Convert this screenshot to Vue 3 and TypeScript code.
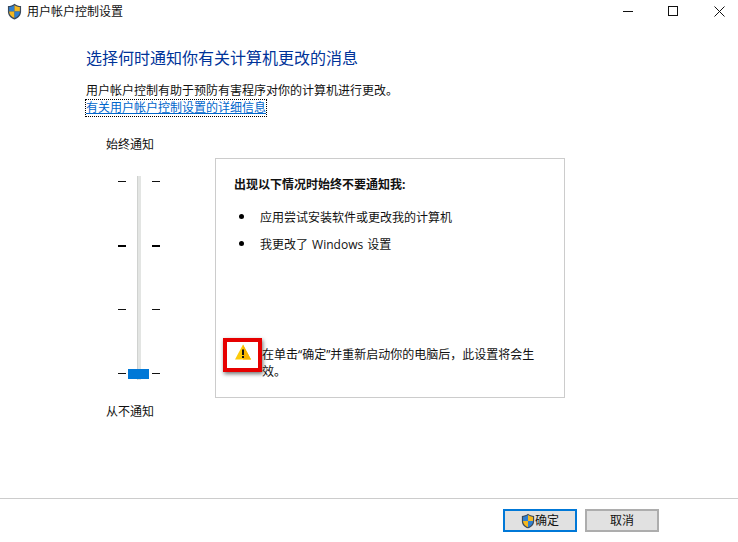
<script setup lang="ts">
const ticks: boolean[] = [false, true, false, false]
const bullets: string[] = ['应用尝试安装软件或更改我的计算机', '我更改了 Windows 设置']
</script>

<template>
  <div class="window">
    <header class="titlebar">
      <svg class="shield" viewBox="0 0 16 18" width="15" height="17">
        <path d="M8 .6C6 2.2 3.6 3 1 3.2v6c0 4 3 6.900 7 8.200 4-1.300 7-4.200 7-8.200v-6C12.400 3 10 2.200 8 .6z" fill="#3b4a5c" />
        <path d="M8 2.200V9H2.300V4.300C4.400 4.100 6.300 3.400 8 2.200z" fill="#2f7fd0" />
        <path d="M8 2.200V9h5.700V4.300C11.600 4.100 9.700 3.400 8 2.200z" fill="#f5b81f" />
        <path d="M2.300 9H8v7C4.800 14.800 2.300 12.400 2.300 9z" fill="#f5b81f" />
        <path d="M13.700 9H8v7c3.200-1.200 5.700-3.600 5.700-7z" fill="#2f7fd0" />
      </svg>
      <span class="title">用户帐户控制设置</span>
      <div class="controls">
        <svg width="10" height="10" viewBox="0 0 10 10" class="min"><path d="M0 5.500h10" stroke="#111" fill="none" /></svg>
        <svg width="10" height="10" viewBox="0 0 10 10" class="max"><rect x=".5" y=".5" width="9" height="9" stroke="#111" fill="none" /></svg>
        <svg width="11" height="11" viewBox="0 0 11 11" class="close"><path d="M.5.500l10 10M10.500.500l-10 10" stroke="#111" fill="none" /></svg>
      </div>
    </header>

    <main class="content">
      <h1 class="heading">选择何时通知你有关计算机更改的消息</h1>
      <p class="desc">用户帐户控制有助于预防有害程序对你的计算机进行更改。</p>
      <a class="link">有关用户帐户控制设置的详细信息</a>

      <div class="body">
        <div class="slider-col">
          <div class="slider-label">始终通知</div>
          <div class="slider">
            <div class="track"></div>
            <div class="ticks">
              <div v-for="(bold, i) in ticks" :key="i" class="tick-row" :class="{ bold }">
                <span class="tick"></span><span class="tick"></span>
              </div>
            </div>
            <div class="thumb"></div>
          </div>
          <div class="slider-label bottom">从不通知</div>
        </div>

        <section class="panel">
          <div class="panel-title">出现以下情况时始终不要通知我:</div>
          <ul class="list">
            <li v-for="b in bullets" :key="b"><span class="dot"></span><span>{{ b }}</span></li>
          </ul>
          <div class="notice">
            <div class="warn-box">
              <svg class="warn-icon" width="16" height="16" viewBox="0 0 16 16">
                <path d="M8 .5L16 15.500H0z" fill="#fdcb0a" />
                <path d="M8 .5L16 15.500H8z" fill="#f7b500" />
                <rect x="7" y="5.500" width="2" height="5.500" fill="#111" />
                <rect x="7" y="12" width="2" height="2" fill="#111" />
              </svg>
            </div>
            <p class="notice-text">在单击“确定”并重新启动你的电脑后，此设置将会生效。</p>
          </div>
        </section>
      </div>
    </main>

    <footer class="footer">
      <button class="btn primary">
        <svg viewBox="0 0 16 18" width="14" height="16">
          <path d="M8 .6C6 2.200 3.600 3 1 3.200v6c0 4 3 6.900 7 8.200 4-1.300 7-4.200 7-8.200v-6C12.400 3 10 2.200 8 .6z" fill="#3b4a5c" />
          <path d="M8 2.200V9H2.300V4.300C4.400 4.100 6.300 3.400 8 2.200z" fill="#2f7fd0" />
          <path d="M8 2.200V9h5.700V4.300C11.600 4.100 9.700 3.400 8 2.200z" fill="#f5b81f" />
          <path d="M2.300 9H8v7C4.800 14.800 2.300 12.400 2.300 9z" fill="#f5b81f" />
          <path d="M13.700 9H8v7c3.200-1.200 5.700-3.600 5.700-7z" fill="#2f7fd0" />
        </svg>
        <span>确定</span>
      </button>
      <button class="btn">取消</button>
    </footer>
  </div>
</template>

<style scoped>
.window {
  width: 738px;
  height: 542px;
  background: #fff;
  color: #111;
  display: flex;
  flex-direction: column;
  overflow: hidden;
  font-family: "Open Sans", "Noto Sans CJK SC", sans-serif;
  font-size: 12px;
  line-height: 16px;
}
.titlebar {
  height: 23px;
  display: flex;
  align-items: center;
  padding-left: 7px;
  flex: none;
}
.shield { flex: none; margin-right: 5px; }
.title { color: #111; }
.controls {
  margin-left: auto;
  display: flex;
  align-items: flex-start;
  align-self: flex-start;
  padding: 6px 13px 0 0;
}
.min { margin-right: 35px; }
.max { margin-right: 36px; }
.content {
  flex: 1;
  padding: 24px 0 0 86px;
  display: flex;
  flex-direction: column;
  align-items: flex-start;
}
.heading {
  margin: 0;
  font-size: 16px;
  font-weight: 400;
  line-height: 22px;
  color: #003399;
}
.desc { margin: 14px 0 0; }
.link {
  margin-top: 1px;
  color: #0066cc;
  text-decoration: underline;
  outline: 1px dotted #000;
  outline-offset: 0;
}
.body {
  display: flex;
  margin-top: 5px;
  margin-left: 20px;
  position: relative;
}
.slider-col {
  width: 48px;
  margin-right: 61px;
  padding-top: 16px;
  display: flex;
  flex-direction: column;
}
.slider-label { white-space: nowrap; }
.slider-label.bottom { margin-top: 20px; }
.slider {
  position: relative;
  margin-top: 23px;
  height: 208px;
}
.track {
  position: absolute;
  left: 31px;
  top: 0;
  width: 4px;
  height: 204px;
  background: #e3e5e3;
  border-left: 1px solid #d0d2d0;
  box-sizing: border-box;
}
.ticks {
  position: absolute;
  left: 12px;
  top: 5px;
  width: 42px;
  height: 193px;
  display: flex;
  flex-direction: column;
  justify-content: space-between;
}
.tick-row {
  display: flex;
  justify-content: space-between;
  height: 1px;
}
.tick { width: 8px; height: 1px; background: #111; }
.bold .tick { height: 2px; background: #000; }
.thumb {
  position: absolute;
  left: 22px;
  top: 193px;
  width: 21px;
  height: 10px;
  background: #0078d7;
}
.panel {
  width: 350px;
  height: 240px;
  box-sizing: border-box;
  border: 1px solid #cccccc;
  margin-top: 37px;
  padding: 18px 18px 0 18px;
  display: flex;
  flex-direction: column;
}
.panel-title { font-weight: 700; }
.list {
  list-style: none;
  margin: 17px 0 0;
  padding: 0;
  word-spacing: 1px;
}
.list li {
  display: flex;
  align-items: center;
  height: 16px;
  margin-bottom: 11px;
}
.dot {
  width: 5px;
  height: 5px;
  border-radius: 50%;
  background: #000;
  margin: -3px 16px 0 5px;
}
.notice {
  margin-top: 82px;
  margin-left: 28px;
  position: relative;
}
.notice-text { margin: 0; width: 285px; line-height: 17px; }
.warn-box {
  position: absolute;
  left: -39px;
  top: -8px;
  width: 39px;
  height: 34px;
  box-sizing: border-box;
  border: 4px solid #e60000;
  box-shadow: 1px 2px 4px rgba(0, 0, 0, 0.55);
  display: flex;
  align-items: center;
  justify-content: center;
}
.warn-icon { margin-bottom: 6px; }
.footer {
  flex: none;
  height: 44px;
  box-sizing: border-box;
  border-top: 1px solid #cccccc;
  display: flex;
  justify-content: flex-end;
  gap: 8px;
  padding: 10px 79px 0 0;
}
.btn {
  width: 74px;
  height: 23px;
  box-sizing: border-box;
  border: 2px solid #adadad;
  background: #e1e1e1;
  font: inherit;
  color: #111;
  padding: 0;
  display: flex;
  align-items: center;
  justify-content: center;
}
.btn.primary { border-color: #0078d7; }
</style>
